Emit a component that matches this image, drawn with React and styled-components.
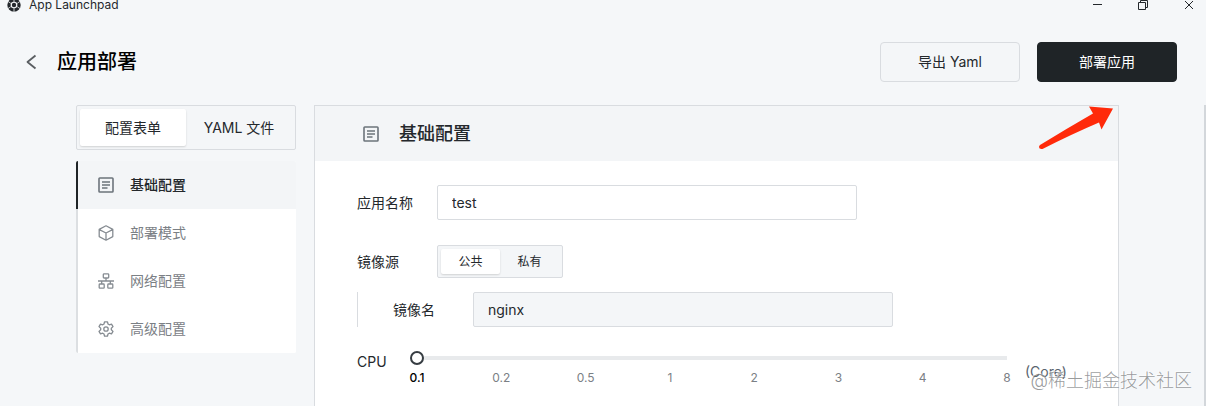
import React, { useState } from "react"
import styled, { createGlobalStyle } from "styled-components"

const GlobalStyle = createGlobalStyle`
  * {
    box-sizing: border-box;
  }
  body {
    margin: 0;
    background: #f5f7f9;
    color: #24282c;
    font-family: Inter, "Noto Sans CJK SC", sans-serif;
    font-size: 14px;
    line-height: 20px;
  }
  button,
  input {
    font: inherit;
    color: inherit;
  }
`

const Page = styled.div`
  position: relative;
  display: flex;
  flex-direction: column;
  height: 100vh;
  overflow: hidden;
`
const TitleBar = styled.div`
  display: flex;
  align-items: center;
  justify-content: space-between;
  height: 10px;
  padding: 0 11px 0 7px;
`
const AppName = styled.div`
  display: flex;
  align-items: center;
  gap: 8px;
  font-size: 12px;
`
const WindowControls = styled.div`
  display: flex;
  gap: 34px;
`
const IconButton = styled.button`
  display: flex;
  padding: 0;
  border: 0;
  background: none;
  color: ${props => props.$color || "#24282c"};
  cursor: pointer;
`

const Header = styled.header`
  display: flex;
  align-items: center;
  padding: 32px 29px 23px 23px;
`
const Title = styled.h1`
  flex: 1;
  margin: 0 0 0 18px;
  color: #000;
  font-size: 20px;
  font-weight: 500;
  line-height: 28px;
`
const Button = styled.button`
  width: 140px;
  height: 40px;
  margin-left: 17px;
  padding: 0;
  border: 1px solid ${props => (props.$primary ? "#1f2427" : "#d9dce0")};
  border-radius: 4px;
  background: ${props => (props.$primary ? "#1f2427" : "#f4f6f8")};
  color: ${props => (props.$primary ? "#fff" : "#24282c")};
  cursor: pointer;
`

const Main = styled.main`
  display: flex;
  flex: 1;
  min-height: 0;
  padding-left: 76px;
`
const Sidebar = styled.aside`
  flex: 0 0 220px;
  margin-right: 18px;
`
const Tabs = styled.div`
  display: grid;
  grid-template-columns: 1fr 1fr;
  width: ${props => (props.$small ? "126px" : "100%")};
  height: ${props => (props.$small ? "33px" : "45px")};
  padding: 3px;
  border: 1px solid #d9dce0;
  border-radius: 2px;
  background: #f4f6f8;
  font-size: ${props => (props.$small ? "12px" : "14px")};
`
const Tab = styled.button`
  padding: 0;
  border: 0;
  border-radius: 2px;
  background: ${props => (props.$active ? "#fff" : "none")};
  box-shadow: ${props =>
    props.$active ? "0 1px 2px rgba(0, 0, 0, 0.15)" : "none"};
  cursor: pointer;
`
const Nav = styled.nav`
  margin-top: 11px;
  border-radius: 2px;
  background: #fff;
  overflow: hidden;
`
const NavItem = styled.a`
  display: flex;
  align-items: center;
  gap: 16px;
  height: 48px;
  padding-left: 20px;
  border-left: 2px solid ${props => (props.$active ? "#1f2427" : "#dcdfe2")};
  background: ${props => (props.$active ? "#f3f5f7" : "#fff")};
  color: ${props => (props.$active ? "#24282c" : "#7b8085")};
  font-weight: ${props => (props.$active ? 500 : 400)};
  text-decoration: none;

  svg {
    color: ${props => (props.$active ? "#6c747b" : "#868c92")};
  }
`

const Panel = styled.section`
  flex: 1;
  min-width: 0;
  margin-right: 85px;
  border: 1px solid #d9dce0;
  border-bottom: 0;
  background: #fff;
`
const PanelHeader = styled.div`
  display: flex;
  align-items: center;
  gap: 20px;
  height: 55px;
  padding-left: 48px;
  background: #f3f5f7;
  color: #6c747b;
`
const PanelTitle = styled.h2`
  margin: 0;
  color: #24282c;
  font-size: 18px;
  font-weight: 500;
  line-height: 24px;
`
const Form = styled.form`
  padding: 24px 42px;
`
const Field = styled.div`
  display: flex;
  align-items: center;
  margin-bottom: ${props => (props.$tight ? "14px" : "25px")};
`
const SubField = styled(Field)`
  margin-bottom: 24px;
  padding-left: 35px;
  border-left: 1px solid #d9dce0;
`
const Label = styled.label`
  flex: 0 0 80px;
`
const TextInput = styled.input`
  flex: 0 1 420px;
  min-width: 0;
  height: 35px;
  padding: 0 14px;
  border: 1px solid #d9dce0;
  border-radius: 2px;
  background: ${props => (props.$filled ? "#f4f6f8" : "#fff")};
  outline: none;
`

const SliderField = styled.div`
  display: flex;
  align-items: flex-start;
`
const SliderLabel = styled.label`
  flex: 0 0 60px;
  padding-top: 1px;
`
const Slider = styled.div`
  flex: 0 1 590px;
`
const Range = styled.input`
  display: block;
  width: calc(100% + 14px);
  height: 14px;
  margin: 0 -7px;
  appearance: none;
  background: linear-gradient(#e8eaec, #e8eaec) center / calc(100% - 14px) 4px
    no-repeat;

  &::-webkit-slider-thumb {
    width: 14px;
    height: 14px;
    appearance: none;
    border: 2px solid #363c42;
    border-radius: 50%;
    background: #fff;
  }
`
const Marks = styled.div`
  display: flex;
  justify-content: space-between;
  margin: 5px -10px 0;
  font-size: 12px;
  line-height: 16px;
`
const Mark = styled.span`
  width: 20px;
  color: ${props => (props.$active ? "#000" : "#7b8085")};
  font-weight: ${props => (props.$active ? 500 : 400)};
  text-align: center;
`
const Unit = styled.span`
  margin-left: 18px;
  padding-top: 11px;
  color: #5a646e;
`
const Scrollbar = styled.div`
  width: 2px;
  background: #d3d7db;
`

const Arrow = styled.svg`
  position: absolute;
  top: 105px;
  right: 92px;
`
const Watermark = styled.div`
  position: absolute;
  right: 14px;
  bottom: 13px;
  color: rgba(120, 122, 124, 0.75);
  font-size: 18px;
  font-weight: 300;
  line-height: 24px;
  text-shadow: -1px -1px 0 rgba(255, 255, 255, 0.7);
`

const stroke = {
  fill: "none",
  stroke: "currentColor",
  strokeWidth: 1.3,
  strokeLinejoin: "round",
}

const FormIcon = () => (
  <svg width="16" height="16" viewBox="0 0 16 16" {...stroke}>
    <rect x="1" y="1" width="14" height="14" rx="0.8" strokeWidth="1.6" />
    <path d="M4 5h8M4 8h8M4 11h5.500" strokeWidth="1.4" />
  </svg>
)
const BoxIcon = () => (
  <svg width="16" height="16" viewBox="0 0 16 16" {...stroke}>
    <path d="M8 .8l6.800 3.600v7.200L8 15.200l-6.800-3.600V4.400zM1.400 4.600L8 8l6.600-3.400M8 8v7" />
  </svg>
)
const NetworkIcon = () => (
  <svg width="16" height="16" viewBox="0 0 16 16" {...stroke}>
    <rect x="5.300" y=".8" width="5.400" height="4.200" rx="0.8" />
    <rect x="1.200" y="11" width="5" height="4.200" rx="0.8" />
    <rect x="9.800" y="11" width="5" height="4.200" rx="0.8" />
    <path d="M8 5v3M0 8h16M3.700 8v3M12.300 8v3" />
  </svg>
)
const GearIcon = () => (
  <svg width="16" height="16" viewBox="0 0 16 16" {...stroke}>
    <path d="M6.500.8h3l.5 2.200 1.300.8 2.200-.7 1.500 2.500-1.700 1.600v1.600l1.700 1.600-1.500 2.500-2.200-.7-1.300.8-.5 2.200h-3L6 13l-1.300-.8-2.200.7L1 10.400l1.700-1.600V7.200L1 5.600l1.500-2.500 2.200.7L6 3z" />
    <circle cx="8" cy="8" r="2.200" />
  </svg>
)
const LogoIcon = () => (
  <svg width="14" height="14" viewBox="0 0 14 14">
    <circle cx="7" cy="7" r="6.700" fill="#24282c" />
    <path d="M7 3.200l3.300 1.900v3.800L7 10.800 3.700 8.900V5.100z" fill="#f5f7f9" />
    <circle cx="7" cy="7" r="2.200" fill="#24282c" />
    <path
      d="M7 0v3M7 11v3M1 3.500L3.500 5M10.500 9l2.500 1.500M1 10.500L3.500 9M10.500 5L13 3.500"
      stroke="#f5f7f9"
      strokeWidth="0.8"
    />
  </svg>
)

const sections = [
  { id: "basic", name: "基础配置", Icon: FormIcon },
  { id: "mode", name: "部署模式", Icon: BoxIcon },
  { id: "network", name: "网络配置", Icon: NetworkIcon },
  { id: "advanced", name: "高级配置", Icon: GearIcon },
]
const cpuValues = ["0.1", "0.2", "0.5", "1", "2", "3", "4", "8"]

const App = () => {
  const [tab, setTab] = useState("form")
  const [source, setSource] = useState("public")
  const [section, setSection] = useState("basic")
  const [cpu, setCpu] = useState(0)

  return (
    <Page>
      <GlobalStyle />
      <TitleBar>
        <AppName>
          <LogoIcon />
          App Launchpad
        </AppName>
        <WindowControls>
          <IconButton aria-label="Minimize">
            <svg width="12" height="12" viewBox="0 0 12 12" {...stroke}>
              <path d="M2 5.500h9" strokeWidth="1" />
            </svg>
          </IconButton>
          <IconButton aria-label="Restore">
            <svg width="12" height="12" viewBox="0 0 12 12" {...stroke}>
              <path
                d="M1.500 3.500h7v7h-7zM3.500 3V1.500h7v7H9"
                strokeWidth="1"
              />
            </svg>
          </IconButton>
          <IconButton aria-label="Close">
            <svg width="12" height="12" viewBox="0 0 12 12" {...stroke}>
              <path d="M2 2l8 8M10 2l-8 8" strokeWidth="1" />
            </svg>
          </IconButton>
        </WindowControls>
      </TitleBar>

      <Header>
        <IconButton aria-label="Back" $color="#5a5e62">
          <svg width="16" height="16" viewBox="0 0 16 16" {...stroke}>
            <path d="M12.500 1.500L4.500 8l8 6.500" strokeWidth="1.800" />
          </svg>
        </IconButton>
        <Title>应用部署</Title>
        <Button>导出 Yaml</Button>
        <Button $primary>部署应用</Button>
      </Header>

      <Main>
        <Sidebar>
          <Tabs>
            <Tab $active={tab === "form"} onClick={() => setTab("form")}>
              配置表单
            </Tab>
            <Tab $active={tab === "yaml"} onClick={() => setTab("yaml")}>
              YAML 文件
            </Tab>
          </Tabs>
          <Nav>
            {sections.map(({ id, name, Icon }) => (
              <NavItem
                key={id}
                href={`#${id}`}
                $active={section === id}
                onClick={() => setSection(id)}
              >
                <Icon />
                {name}
              </NavItem>
            ))}
          </Nav>
        </Sidebar>

        <Panel>
          <PanelHeader>
            <FormIcon />
            <PanelTitle>基础配置</PanelTitle>
          </PanelHeader>
          <Form>
            <Field>
              <Label htmlFor="appName">应用名称</Label>
              <TextInput id="appName" defaultValue="test" />
            </Field>
            <Field $tight>
              <Label as="span">镜像源</Label>
              <Tabs $small>
                <Tab
                  type="button"
                  $active={source === "public"}
                  onClick={() => setSource("public")}
                >
                  公共
                </Tab>
                <Tab
                  type="button"
                  $active={source === "private"}
                  onClick={() => setSource("private")}
                >
                  私有
                </Tab>
              </Tabs>
            </Field>
            <SubField>
              <Label htmlFor="imageName">镜像名</Label>
              <TextInput id="imageName" $filled defaultValue="nginx" />
            </SubField>
            <SliderField>
              <SliderLabel htmlFor="cpu">CPU</SliderLabel>
              <Slider>
                <Range
                  id="cpu"
                  type="range"
                  min="0"
                  max="7"
                  value={cpu}
                  onChange={e => setCpu(Number(e.target.value))}
                />
                <Marks>
                  {cpuValues.map((value, index) => (
                    <Mark key={value} $active={index === cpu}>
                      {value}
                    </Mark>
                  ))}
                </Marks>
              </Slider>
              <Unit>(Core)</Unit>
            </SliderField>
          </Form>
        </Panel>
        <Scrollbar />
      </Main>

      <Arrow width="76" height="46" viewBox="0 0 76 46">
        <path
          d="M2 40Q28 24 55 8.500L51 1.500L75 3.500L63.500 24.500L61 17.500Q34 29 4.500 44Q1 44.500 1 42Q1 41 2 40z"
          fill="#ff2a0a"
        />
      </Arrow>
      <Watermark>@稀土掘金技术社区</Watermark>
    </Page>
  )
}

export default App
